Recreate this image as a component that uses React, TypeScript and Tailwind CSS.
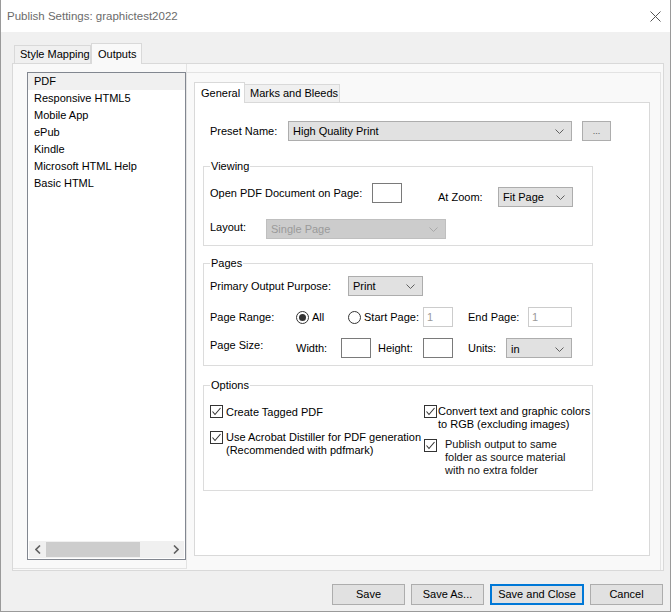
import React from 'react';

const outputs = ['PDF', 'Responsive HTML5', 'Mobile App', 'ePub', 'Kindle', 'Microsoft HTML Help', 'Basic HTML'];

function Chevron({ color = '#606060' }: { color?: string }) {
  return (
    <svg width="9" height="5" viewBox="0 0 9 5" className="shrink-0">
      <polyline points="0.5,0.5 4.5,4.5 8.5,0.5" fill="none" stroke={color} strokeWidth="1" />
    </svg>
  );
}

function Select({ text, className, disabled }: { text: string; className: string; disabled?: boolean }) {
  return (
    <div
      className={`flex items-center justify-between h-[20px] border pl-[4px] pr-[7px] ${
        disabled ? 'bg-[#cccccc] border-[#bfbfbf] text-[#9a9a9a]' : 'bg-[#e1e1e1] border-[#adadad] text-black'
      } ${className}`}
    >
      <span>{text}</span>
      <Chevron color={disabled ? '#a8a8a8' : '#606060'} />
    </div>
  );
}

function TextBox({ className, value, disabled }: { className: string; value?: string; disabled?: boolean }) {
  return (
    <div
      className={`h-[20px] bg-white border flex items-center pl-[3px] ${
        disabled ? 'border-[#cccccc] text-[#9a9a9a]' : 'border-[#7a7a7a]'
      } ${className}`}
    >
      {value}
    </div>
  );
}

function CheckBox() {
  return (
    <div className="w-[13px] h-[13px] border border-[#333] bg-white shrink-0 flex items-center justify-center">
      <svg width="11" height="11" viewBox="0 0 11 11">
        <polyline points="1.5,5.5 4,8.5 9.5,2" fill="none" stroke="#333" strokeWidth="1.1" />
      </svg>
    </div>
  );
}

function Radio({ checked }: { checked?: boolean }) {
  return (
    <div className="w-[13px] h-[13px] rounded-full border border-[#333] bg-white shrink-0 flex items-center justify-center">
      {checked && <div className="w-[7px] h-[7px] rounded-full bg-[#333]" />}
    </div>
  );
}

function Button({ label, primary }: { label: string; primary?: boolean }) {
  return (
    <div
      className={`h-[21px] flex items-center justify-center bg-[#e1e1e1] ${
        primary ? 'w-[94px] border-2 border-[#0078d7]' : 'w-[73px] border border-[#adadad]'
      }`}
    >
      {label}
    </div>
  );
}

export default function App() {
  return (
    <div className="w-[671px] h-[612px] bg-[#f0f0f0] border-x border-b border-[#9a9a9a] flex flex-col font-['Liberation_Sans',Arial,sans-serif] text-[11px] text-black leading-[13px] whitespace-nowrap">
      {/* title bar */}
      <div className="h-[32px] bg-white flex items-center justify-between pl-[6px] pr-[9px] shrink-0">
        <span className="text-[11.5px] text-[#6b6b6b]">Publish Settings: graphictest2022</span>
        <svg width="11" height="11" viewBox="0 0 11 11">
          <line x1="0.5" y1="0.5" x2="10.5" y2="10.5" stroke="#555" strokeWidth="1" />
          <line x1="10.5" y1="0.5" x2="0.5" y2="10.5" stroke="#555" strokeWidth="1" />
        </svg>
      </div>

      {/* outer tabs */}
      <div className="mt-[10px] ml-[13px] h-[21px] flex items-end">
        <div className="w-[77px] h-[18px] border border-b-0 border-[#d9d9d9] bg-[#f0f0f0] flex items-center pl-[5px]">
          Style Mapping
        </div>
        <div className="w-[51px] h-[21px] border border-b-0 border-[#d9d9d9] bg-[#f9f9f9] flex items-center pl-[6px] -mb-px relative z-10">
          Outputs
        </div>
      </div>

      {/* outer tab page */}
      <div className="ml-[11px] w-[652px] h-[508px] border border-[#d9d9d9] bg-[#f9f9f9] flex">
        <div className="w-[174px] h-[505px] border-r border-b border-[#e3e3e3] pl-[14px] pt-[8px]">
          <div className="w-[159px] h-[488px] border border-[#828790] bg-white flex flex-col">
            <div className="flex flex-col">
              {outputs.map((o, i) => (
                <div key={o} className={`h-[17px] flex items-center pl-[6px] ${i === 0 ? 'bg-[#f0f0f0]' : ''}`}>
                  {o}
                </div>
              ))}
            </div>
            <div className="flex-1" />
            <div className="mx-px mb-px h-[17px] bg-[#f0f0f0] flex items-center">
              <div className="w-[17px] flex justify-center">
                <svg width="6" height="9" viewBox="0 0 6 9">
                  <polyline points="5,0.5 1,4.5 5,8.5" fill="none" stroke="#606060" strokeWidth="1.6" />
                </svg>
              </div>
              <div className="w-[94px] h-[15px] bg-[#cdcdcd]" />
              <div className="flex-1" />
              <div className="w-[17px] flex justify-center">
                <svg width="6" height="9" viewBox="0 0 6 9">
                  <polyline points="1,0.5 5,4.5 1,8.5" fill="none" stroke="#606060" strokeWidth="1.6" />
                </svg>
              </div>
            </div>
          </div>
        </div>

        <div className="flex-1 border-t border-r border-[#e3e3e3] mt-[8px] mr-[2px] h-[498px] pl-[7px] pt-[8px]">
          {/* inner tabs */}
          <div className="h-[21px] flex items-end">
            <div className="w-[51px] h-[21px] border border-b-0 border-[#d9d9d9] bg-white flex items-center pl-[6px] -mb-px relative z-10">
              General
            </div>
            <div className="w-[95px] h-[18px] border border-b-0 border-l-0 border-[#d9d9d9] bg-[#f0f0f0] flex items-center pl-[5px]">
              Marks and Bleeds
            </div>
          </div>

          <div className="w-[456px] h-[454px] border border-[#d9d9d9] bg-white">
            {/* preset */}
            <div className="mt-[18px] pl-[15px] flex items-center">
              <span className="w-[78px]">Preset Name:</span>
              <Select text="High Quality Print" className="w-[284px]" />
              <div className="ml-[10px] w-[29px] h-[20px] border border-[#adadad] bg-[#e1e1e1] flex items-center justify-center text-[#555] text-[9px]">
                ...
              </div>
            </div>

            {/* viewing */}
            <fieldset className="mt-[18px] ml-[8px] w-[390px] min-w-0 border border-[#dcdcdc] px-[6px] pb-[6px]">
              <legend className="px-[1px] leading-[14px]">Viewing</legend>
              <div className="mt-[10px] flex items-start">
                <span className="w-[162px] h-[20px] flex items-center">Open PDF Document on Page:</span>
                <TextBox className="w-[30px]" />
                <span className="ml-[36px] w-[60px] h-[20px] mt-[4px] flex items-center">At Zoom:</span>
                <Select text="Fit Page" className="w-[75px] mt-[4px]" />
              </div>
              <div className="mt-[12px] flex items-center">
                <span className="w-[56px] -mt-[3px]">Layout:</span>
                <Select text="Single Page" className="w-[180px]" disabled />
              </div>
            </fieldset>

            {/* pages */}
            <fieldset className="mt-[10px] ml-[8px] w-[390px] min-w-0 border border-[#dcdcdc] px-[6px] pb-[7px]">
              <legend className="px-[1px] leading-[14px]">Pages</legend>
              <div className="mt-[6px] flex items-center">
                <span className="w-[138px]">Primary Output Purpose:</span>
                <Select text="Print" className="w-[75px]" />
              </div>
              <div className="mt-[11px] flex items-center">
                <span className="w-[86px]">Page Range:</span>
                <div className="w-[52px] flex items-center">
                  <Radio checked />
                  <span className="ml-[3px]">All</span>
                </div>
                <div className="w-[75px] flex items-center">
                  <Radio />
                  <span className="ml-[3px]">Start Page:</span>
                </div>
                <TextBox className="w-[30px]" value="1" disabled />
                <span className="ml-[15px] w-[60px]">End Page:</span>
                <TextBox className="w-[44px]" value="1" disabled />
              </div>
              <div className="mt-[11px] flex items-center">
                <span className="w-[86px] -mt-[6px]">Page Size:</span>
                <span className="w-[45px]">Width:</span>
                <TextBox className="w-[30px]" />
                <span className="ml-[7px] w-[45px]">Height:</span>
                <TextBox className="w-[30px]" />
                <span className="ml-[15px] w-[38px]">Units:</span>
                <Select text="in" className="w-[66px] pt-[3px]" />
              </div>
            </fieldset>

            {/* options */}
            <fieldset className="mt-[12px] ml-[8px] w-[390px] min-w-0 border border-[#dcdcdc] px-[6px] pb-[13px]">
              <legend className="px-[1px] leading-[14px]">Options</legend>
              <div className="flex">
                <div className="w-[214px] shrink-0 flex flex-col">
                  <div className="mt-[13px] flex items-start">
                    <CheckBox />
                    <span className="ml-[3px] mt-[1px]">Create Tagged PDF</span>
                  </div>
                  <div className="mt-[12px] flex items-start">
                    <CheckBox />
                    <span className="ml-[3px]">
                      Use Acrobat Distiller for PDF generation
                      <br />
                      (Recommended with pdfmark)
                    </span>
                  </div>
                </div>
                <div className="flex flex-col">
                  <div className="mt-[13px] flex items-start">
                    <CheckBox />
                    <span className="ml-[1px]">
                      Convert text and graphic colors
                      <br />
                      to RGB (excluding images)
                    </span>
                  </div>
                  <div className="mt-[7px] flex items-start">
                    <div className="mt-[1px]">
                      <CheckBox />
                    </div>
                    <span className="ml-[8px] text-[#111]">
                      Publish output to same
                      <br />
                      folder as source material
                      <br />
                      with no extra folder
                    </span>
                  </div>
                </div>
              </div>
            </fieldset>
          </div>
        </div>
      </div>

      {/* bottom buttons */}
      <div className="mt-[13px] pr-[7px] flex justify-end gap-[6px]">
        <Button label="Save" />
        <Button label="Save As..." />
        <Button label="Save and Close" primary />
        <Button label="Cancel" />
      </div>
    </div>
  );
}
